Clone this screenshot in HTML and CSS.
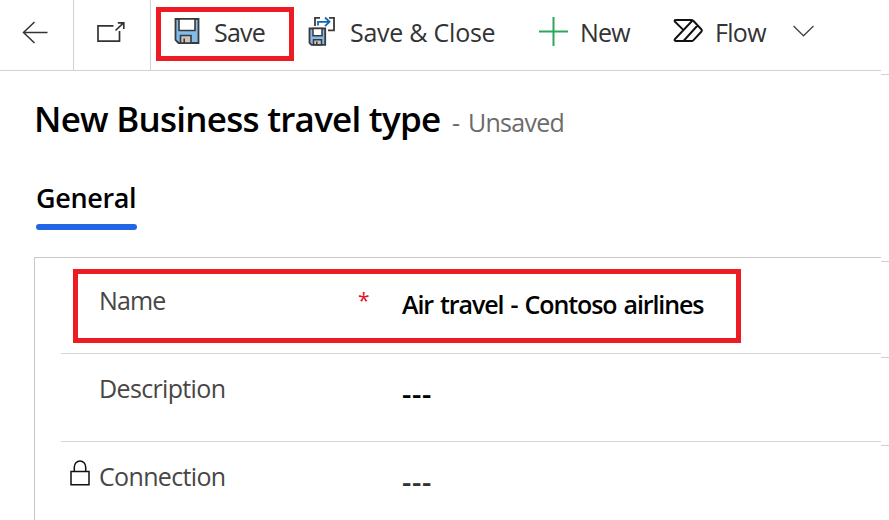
FILE: index.html
```html
<!DOCTYPE html>
<html lang="en">
<head>
<meta charset="utf-8">
<title>New Business travel type</title>
<link rel="stylesheet" href="styles.css">
</head>
<body>
<div class="page">
  <div class="content">
    <header class="toolbar">
      <button class="nav back" aria-label="Back">
        <svg width="26" height="24" viewBox="0 0 26 24"><path d="M12.500 1 1.500 11.500l11 10.500M1.500 11.500h24" fill="none" stroke="#333" stroke-width="1.500"/></svg>
      </button>
      <button class="nav popout" aria-label="Open in new window">
        <svg width="30" height="22" viewBox="0 0 30 22"><path d="M17.500 4.800H2v15.400h21.500V10M19.500 9.500 27.500 1.800M21.800 1.800h6V8" fill="none" stroke="#333" stroke-width="1.700"/></svg>
      </button>
      <button class="command save">
        <svg width="26" height="26" viewBox="0 0 26 26"><path d="M1.500 1h23v24h-20l-3-3z" fill="#83bbea" stroke="#3a3a3a" stroke-width="1.800"/><path d="M5 1h16v11.500H5z" fill="#fff" stroke="#3a3a3a" stroke-width="1.600"/><path d="M6.500 25v-7.500H17V25z" fill="#c8c6c4" stroke="#3a3a3a" stroke-width="1.600"/><path d="M10.200 20.500V25" stroke="#3a3a3a" stroke-width="1.600"/></svg>
        <span>Save</span>
      </button>
      <button class="command save-close">
        <svg width="28" height="30" viewBox="0 0 28 30"><path d="M7 10V1.800h5M21 1.800h5V14.300h-6" fill="none" stroke="#3a3a3a" stroke-width="1.800"/><path d="M10 9.500V5.800h11M17 1.500l4.500 4.300L17 10.100" fill="none" stroke="#1267b4" stroke-width="1.800"/><path d="M1.500 12.500h15.700v16.300H3.500l-2-2z" fill="#83bbea" stroke="#3a3a3a" stroke-width="1.800"/><path d="M5 12.500h9v7.200H5z" fill="#fff" stroke="#3a3a3a" stroke-width="1.500"/><path d="M5.500 28.800v-5h8v5z" fill="#c8c6c4" stroke="#3a3a3a" stroke-width="1.500"/><path d="M8.800 25.500v3" stroke="#3a3a3a" stroke-width="1.500"/></svg>
        <span>Save &amp; Close</span>
      </button>
      <button class="command new">
        <svg width="30" height="30" viewBox="0 0 30 30"><path d="M0 14.500h29M14.500 0v29" stroke="#2ba85c" stroke-width="2"/></svg>
        <span>New</span>
      </button>
      <button class="command flow">
        <svg width="30" height="26" viewBox="0 0 30 26"><path d="M2.500 2H18q1.500 0 2.500 1l8 8.500q.7 1 0 2l-8 8.600q-.8.900-1.800.9H2.800q-2-.2-.8-2L19.500 2.500M10.500 12.200 1.800 3.500q-.6-1.300.7-1.500M10.500 23 24.500 7.500" fill="none" stroke="#111" stroke-width="1.900" stroke-linejoin="round"/></svg>
        <span>Flow</span>
        <svg class="chevron" width="22" height="13" viewBox="0 0 22 13"><path d="M1.500 1 11.500 10.800 21.500 1" fill="none" stroke="#444" stroke-width="1.300"/></svg>
      </button>
    </header>
    <div class="heading">
      <h1>New Business travel type</h1>
      <span class="status">- Unsaved</span>
    </div>
    <nav class="tabs"><a class="tab"><span>General</span></a></nav>
    <section class="form">
      <div class="row first">
        <div class="field highlighted">
          <label class="name">Name</label>
          <span class="required">*</span>
          <span class="value contoso">Air travel - Contoso airlines</span>
        </div>
      </div>
      <div class="row">
        <label class="description">Description</label>
        <span class="value dashes">---</span>
      </div>
      <div class="row">
        <svg class="lock" width="20" height="26" viewBox="0 0 20 26"><path d="M1 11.500h18v13.300H1zM4.300 11.500V7a5.700 6 0 0 1 11.400 0v4.500" fill="none" stroke="#111" stroke-width="1.500"/></svg>
        <label class="connection">Connection</label>
        <span class="value dashes locked">---</span>
      </div>
    </section>
  </div>
  <div class="edge"><i class="edge-bar"></i><i class="edge-form"></i><i class="edge-name"></i><i class="edge-description"></i></div>
</div>
</body>
</html>
```
FILE: styles.css
```css
* { box-sizing: border-box; }
body {
  margin: 0;
  background: #fff;
  color: #333;
  font: 25px/36px "Open Sans", "Noto Sans", sans-serif;
  overflow: hidden;
}
.page { display: grid; grid-template-columns: 881px 8px; height: 520px; overflow: hidden; }
.content { display: flex; flex-direction: column; min-width: 0; }
svg { display: block; flex: none; }
span, label, h1 { white-space: nowrap; }
button { margin: 0; padding: 0; border: 0; background: none; color: inherit; font: inherit; text-align: left; }

.toolbar { display: flex; height: 71px; border-bottom: 1px solid #d2d2d2; flex: none; }
.nav { border-right: 1px solid #d2d2d2; display: flex; }
.back { width: 74px; padding: 21px 0 0 22px; }
.popout { width: 77px; padding: 21px 0 0 22px; }
.command { display: flex; align-items: flex-start; height: 54px; margin-top: 7px; }
.command span { margin-top: 7px; }
.save { width: 138px; margin-left: 5px; border: 5px solid #ed1c24; padding: 6px 0 0 13px; gap: 14px; }
.save span { margin-top: -4px; letter-spacing: -.8px; }
.save-close { width: 245px; padding: 9px 0 0 14px; gap: 14px; }
.save-close span { margin-top: -2px; letter-spacing: -.25px; }
.new { width: 134px; padding: 10px 0 0; gap: 11px; }
.new span { margin-top: -3px; letter-spacing: -.8px; }
.flow { padding: 11px 0 0; gap: 12px; }
.flow span { margin-top: -4px; width: 52px; letter-spacing: -.7px; }
.chevron { margin: 7px 0 0 13px; }

.heading { display: flex; height: 84px; padding: 24px 0 0 34px; flex: none; }
h1 { margin: 0; width: 418px; font-size: 35px; line-height: 48px; font-weight: 600; color: #000; letter-spacing: -.75px; }
.status { color: #6b6b6b; line-height: 54px; letter-spacing: -.75px; word-spacing: 3px; }

.tabs { display: flex; height: 102px; padding: 25px 0 0 36px; flex: none; }
.tab { width: 101px; height: 50px; color: #000; font-size: 27px; font-weight: 600; line-height: 36px; letter-spacing: -.35px; display: flex; flex-direction: column; justify-content: space-between; }
.tab::after { content: ""; height: 6px; border-radius: 3px; background: #2266e3; }

.form { flex: none; height: 263px; margin-left: 34px; padding-left: 26px; border: 1px solid #c8c8c8; border-width: 1px 0 0 1px; color: #484644; }
.row { display: flex; height: 88px; border-bottom: 1px solid #d6d6d6; padding: 16px 0 0 38px; }
.row:last-child { border: 0; padding-left: 9px; }
.row.first { height: 96px; padding: 11px 0 0 12px; }
.field { display: flex; width: 668px; height: 74px; border: 5px solid #ed1c24; padding: 8px 0 0 21px; }
label { width: 303px; letter-spacing: -.65px; }
.name { width: 259px; letter-spacing: -.9px; }
.required { width: 44px; color: #e81123; font-size: 21px; }
.value { color: #000; padding-top: 4px; }
.contoso { padding-top: 4px; font-weight: 600; letter-spacing: -1.1px; word-spacing: 1.700px; }
.dashes { padding-top: 5px; font-size: 29px; font-weight: 600; letter-spacing: .7px; }
.locked { color: #333; }
.lock { margin: 2px 9px 0 0; }

.edge { display: flex; flex-direction: column; }
.edge i { flex: none; border-bottom: 1px solid #d2d2d2; }
.edge-bar { height: 75px; }
.edge-form { height: 187px; }
.edge-name { height: 96px; }
.edge-description { height: 88px; }
```
